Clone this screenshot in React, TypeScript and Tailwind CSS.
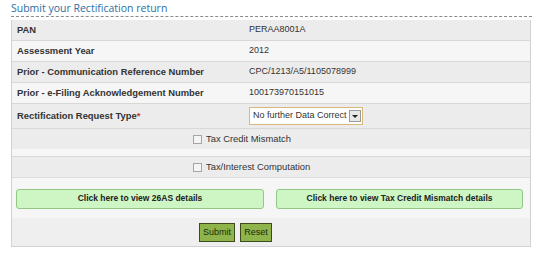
export default function App() {
    const rows = [
        { label: "PAN", value: "PERAA8001A", bg: "bg-[#ececec]" },
        { label: "Assessment Year", value: "2012", bg: "bg-[#f6f6f6]" },
        { label: "Prior - Communication Reference Number", value: "CPC/1213/A5/1105078999", bg: "bg-[#ececec]" },
        { label: "Prior - e-Filing Acknowledgement Number", value: "100173970151015", bg: "bg-[#f6f6f6]" },
    ];

    return (
        <div className="w-[544px] h-[262px] bg-white font-['Liberation_Sans',Arial,sans-serif] text-[9px] text-[#333]">
            <div className="pl-[11px] pr-[12px] pt-[2px]">
                <div className="h-[15px] border-b border-dashed border-[#8a8a8a] font-['Open_Sans',sans-serif] text-[10.5px] leading-[13px] text-[#2d6ea5]">
                    Submit your Rectification return
                </div>
            </div>
            <div className="ml-[11px] mt-[3px] w-[520px] border-l border-r border-b border-[#d2d2d2]">
                {rows.map((r) => (
                    <div key={r.label} className={`flex h-[21px] items-center border-b border-[#d8d8d8] ${r.bg}`}>
                        <div className="w-[237px] pl-[5px] text-[9.4px] font-bold">{r.label}</div>
                        <div>{r.value}</div>
                    </div>
                ))}
                <div className="flex h-[25px] items-center border-b border-[#d8d8d8] bg-[#ececec]">
                    <div className="w-[237px] pl-[5px] text-[9.4px] font-bold">
                        Rectification Request Type<span className="text-[#c0392b]">*</span>
                    </div>
                    <div className="flex h-[18px] w-[114px] items-center justify-between border border-[#d9b77a] bg-white pl-[3px] pr-[1px]">
                        <span className="whitespace-nowrap">No further Data Correct</span>
                        <span className="flex h-[12px] w-[12px] items-center justify-center border border-[#9a9a9a] bg-[#e8e8e8]">
                            <span className="border-l-[3px] border-r-[3px] border-t-[3px] border-l-transparent border-r-transparent border-t-[#222]" />
                        </span>
                    </div>
                </div>
                <div className="flex h-[20px] items-center gap-[4px] bg-[#ececec] pl-[181px] text-[9.4px]">
                    <span className="h-[9px] w-[9px] border border-[#a5a5a5] bg-[#f4f4f4]" />
                    <span>Tax Credit Mismatch</span>
                </div>
                <div className="h-[8px] border-b border-[#d8d8d8] bg-[#f6f6f6]" />
                <div className="flex h-[20px] items-center gap-[4px] bg-[#ececec] pl-[181px] text-[9.4px]">
                    <span className="h-[9px] w-[9px] border border-[#a5a5a5] bg-[#f4f4f4]" />
                    <span>Tax/Interest Computation</span>
                </div>
                <div className="flex h-[41px] items-center gap-[12px] border-t border-[#dcdcdc] bg-[#f6f6f6] px-[4px] pt-[1px]">
                    <button className="h-[20px] w-[248px] rounded-[3px] border border-[#92c784] bg-[#cdf6c4] text-[8.5px] font-bold text-[#222]">
                        Click here to view 26AS details
                    </button>
                    <button className="h-[20px] w-[247px] rounded-[3px] border border-[#92c784] bg-[#cdf6c4] text-[8.5px] font-bold text-[#222]">
                        Click here to view Tax Credit Mismatch details
                    </button>
                </div>
                <div className="flex h-[28px] items-start gap-[5px] bg-[#efefef] pl-[187px] pt-[5px]">
                    <button className="h-[19px] w-[36px] border border-[#3d4a1c] bg-[#8fb44c] text-[#1e2a08]">Submit</button>
                    <button className="h-[19px] w-[32px] border border-[#3d4a1c] bg-[#8fb44c] text-[#1e2a08]">Reset</button>
                </div>
            </div>
        </div>
    );
}
